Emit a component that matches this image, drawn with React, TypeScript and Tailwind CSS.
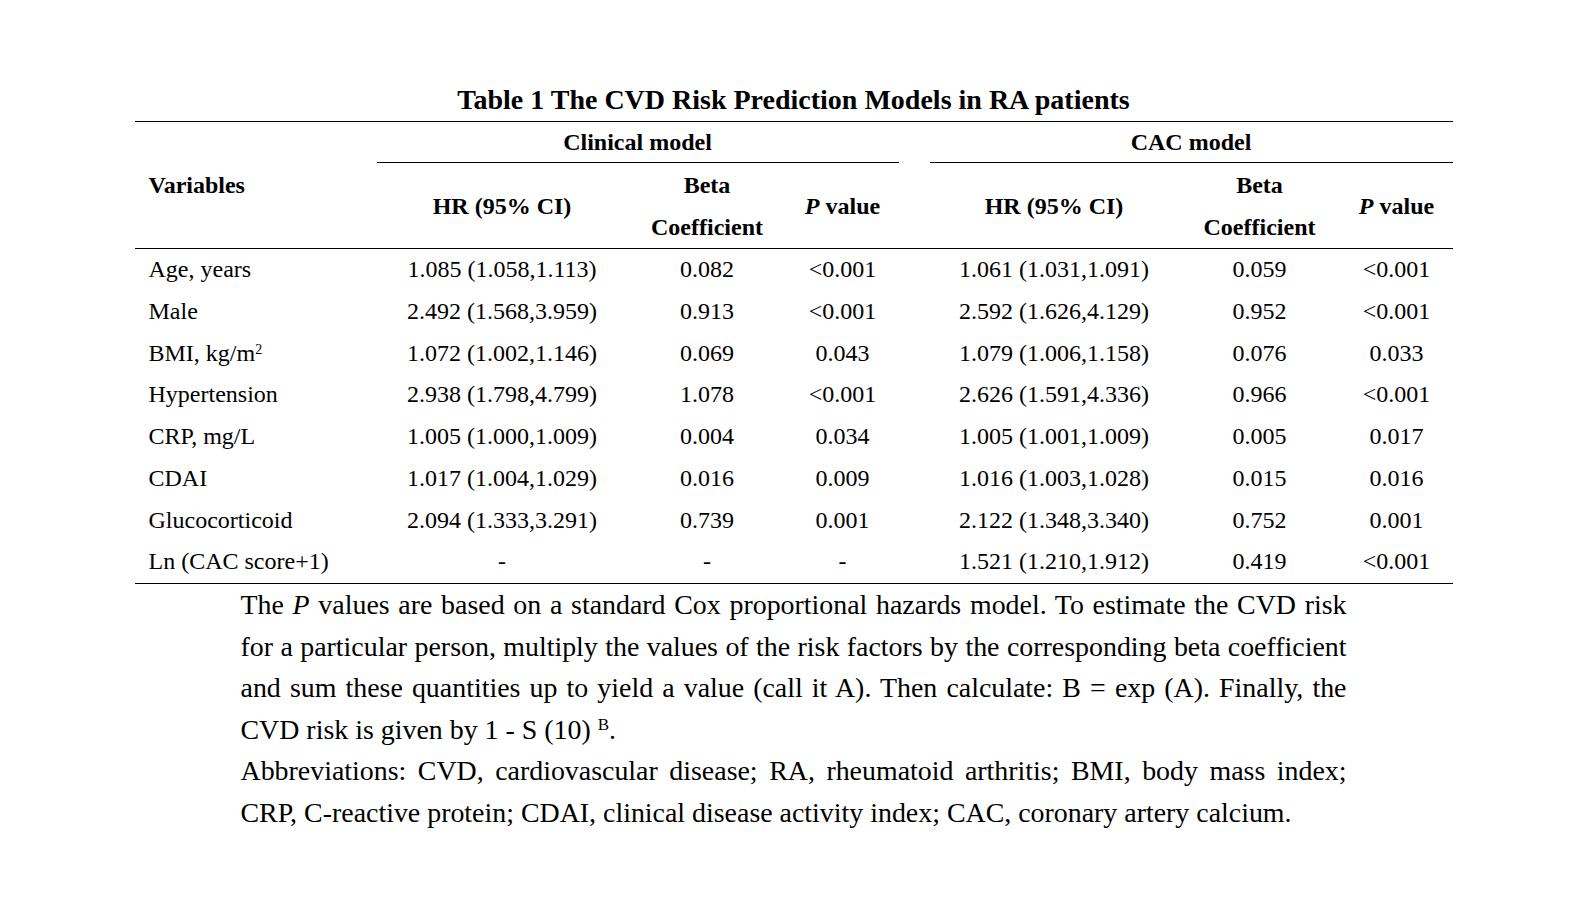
import React from "react";

type Row = {
  label: React.ReactNode;
  clinical: [string, string, string];
  cac: [string, string, string];
};

const rows: Row[] = [
  { label: "Age, years", clinical: ["1.085 (1.058,1.113)", "0.082", "<0.001"], cac: ["1.061 (1.031,1.091)", "0.059", "<0.001"] },
  { label: "Male", clinical: ["2.492 (1.568,3.959)", "0.913", "<0.001"], cac: ["2.592 (1.626,4.129)", "0.952", "<0.001"] },
  {
    label: (
      <>
        BMI, kg/m<sup className="text-[14px]">2</sup>
      </>
    ),
    clinical: ["1.072 (1.002,1.146)", "0.069", "0.043"],
    cac: ["1.079 (1.006,1.158)", "0.076", "0.033"],
  },
  { label: "Hypertension", clinical: ["2.938 (1.798,4.799)", "1.078", "<0.001"], cac: ["2.626 (1.591,4.336)", "0.966", "<0.001"] },
  { label: "CRP, mg/L", clinical: ["1.005 (1.000,1.009)", "0.004", "0.034"], cac: ["1.005 (1.001,1.009)", "0.005", "0.017"] },
  { label: "CDAI", clinical: ["1.017 (1.004,1.029)", "0.016", "0.009"], cac: ["1.016 (1.003,1.028)", "0.015", "0.016"] },
  { label: "Glucocorticoid", clinical: ["2.094 (1.333,3.291)", "0.739", "0.001"], cac: ["2.122 (1.348,3.340)", "0.752", "0.001"] },
  { label: "Ln (CAC score+1)", clinical: ["-", "-", "-"], cac: ["1.521 (1.210,1.912)", "0.419", "<0.001"] },
];

const gridCols = "grid grid-cols-[242px_251px_159px_112px_31px_249px_162px_112px]";

function SubHeader() {
  return (
    <>
      <div className="h-[85px] flex items-center justify-center font-bold">HR (95% CI)</div>
      <div className="h-[85px] flex flex-col items-center justify-center font-bold">
        <span>Beta</span>
        <span>Coefficient</span>
      </div>
      <div className="h-[85px] flex items-center justify-center font-bold">
        <i>P</i>&nbsp;value
      </div>
    </>
  );
}

function Line({ children, last = false }: { children: React.ReactNode; last?: boolean }) {
  return (
    <div className={last ? "text-left whitespace-nowrap" : "text-justify [text-align-last:justify] whitespace-nowrap"}>
      {children}
    </div>
  );
}

export default function App() {
  return (
    <div className="min-h-screen bg-white pt-[80px] text-black font-['Liberation_Serif','Times_New_Roman',serif]">
      <div className="mx-auto w-[1318px]">
        <h1 className="text-center font-bold text-[28px] leading-[40.5px]">
          Table 1 The CVD Risk Prediction Models in RA patients
        </h1>

        <div className="border-t-[1.5px] border-black text-[24px] leading-[42px]">
          {/* header */}
          <div className={`${gridCols} border-b-[1.5px] border-black`}>
            <div className="row-span-2 flex items-center pl-[14px] font-bold">Variables</div>
            <div className="col-span-3 h-[41.5px] flex items-center justify-center border-b-[1.5px] border-black font-bold">
              Clinical model
            </div>
            <div className="row-span-2" />
            <div className="col-span-3 h-[41.5px] flex items-center justify-center border-b-[1.5px] border-black font-bold">
              CAC model
            </div>
            <SubHeader />
            <SubHeader />
          </div>

          {/* body */}
          <div className="border-b-[1.5px] border-black">
            {rows.map((row, i) => (
              <div key={i} className={`${gridCols} h-[41.75px] items-center leading-[41.75px]`}>
                <div className="pl-[14px] whitespace-nowrap">{row.label}</div>
                {row.clinical.map((v, j) => (
                  <div key={`c${j}`} className="text-center">
                    {v}
                  </div>
                ))}
                <div />
                {row.cac.map((v, j) => (
                  <div key={`a${j}`} className="text-center">
                    {v}
                  </div>
                ))}
              </div>
            ))}
          </div>
        </div>

        <div className="mx-auto w-[1106px] text-[27.9px] leading-[41.6px]">
          <Line>
            The <i>P</i> values are based on a standard Cox proportional hazards model. To estimate the CVD risk
          </Line>
          <Line>
            for a particular person, multiply the values of the risk factors by the corresponding beta coefficient
          </Line>
          <Line>
            and sum these quantities up to yield a value (call it A). Then calculate: B = exp (A). Finally, the
          </Line>
          <Line last>
            CVD risk is given by 1 - S (10) <sup className="text-[17px]">B</sup>.
          </Line>
          <Line>
            Abbreviations: CVD, cardiovascular disease; RA, rheumatoid arthritis; BMI, body mass index;
          </Line>
          <Line last>
            CRP, C-reactive protein; CDAI, clinical disease activity index; CAC, coronary artery calcium.
          </Line>
        </div>
      </div>
    </div>
  );
}
